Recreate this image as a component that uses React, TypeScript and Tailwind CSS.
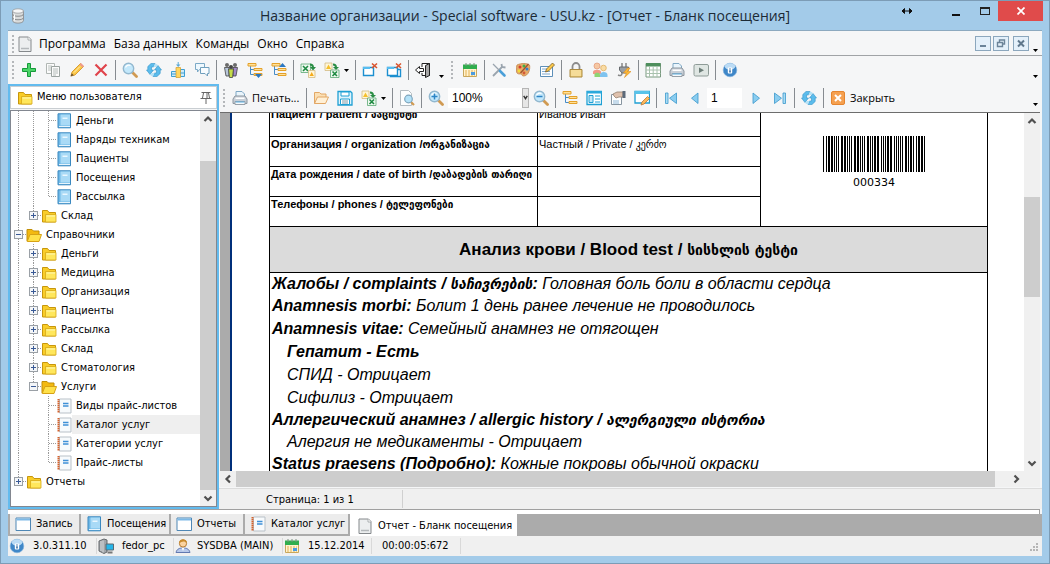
import type { ReactNode } from "react";

type Cell = "line" | "tee" | "corner" | "blank" | "plus" | "minus" | "plusLast" | "minusLast";

type TreeRow = {
  cells: Cell[];
  icon: "book" | "folder" | "open" | "list";
  label: string;
  active?: boolean;
};

const tree: TreeRow[] = [
  { cells: ["line", "line", "tee"], icon: "book", label: "Деньги" },
  { cells: ["line", "line", "tee"], icon: "book", label: "Наряды техникам" },
  { cells: ["line", "line", "tee"], icon: "book", label: "Пациенты" },
  { cells: ["line", "line", "tee"], icon: "book", label: "Посещения" },
  { cells: ["line", "line", "corner"], icon: "book", label: "Рассылка" },
  { cells: ["line", "plusLast"], icon: "folder", label: "Склад" },
  { cells: ["minus"], icon: "open", label: "Справочники" },
  { cells: ["line", "plus"], icon: "folder", label: "Деньги" },
  { cells: ["line", "plus"], icon: "folder", label: "Медицина" },
  { cells: ["line", "plus"], icon: "folder", label: "Организация" },
  { cells: ["line", "plus"], icon: "folder", label: "Пациенты" },
  { cells: ["line", "plus"], icon: "folder", label: "Рассылка" },
  { cells: ["line", "plus"], icon: "folder", label: "Склад" },
  { cells: ["line", "plus"], icon: "folder", label: "Стоматология" },
  { cells: ["line", "minusLast"], icon: "open", label: "Услуги" },
  { cells: ["line", "blank", "tee"], icon: "list", label: "Виды прайс-листов" },
  { cells: ["line", "blank", "tee"], icon: "list", label: "Каталог услуг", active: true },
  { cells: ["line", "blank", "tee"], icon: "list", label: "Категории услуг" },
  { cells: ["line", "blank", "corner"], icon: "list", label: "Прайс-листы" },
  { cells: ["plusLast"], icon: "folder", label: "Отчеты" },
];

// [x, width] of every bar
const bars = [
  [0, 1], [3, 1], [5, 2], [8, 2], [11, 1], [13, 1], [15, 1], [18, 2], [21, 2], [24, 1], [26, 1], [28, 1],
  [31, 2], [34, 2], [37, 1], [39, 1], [41, 1], [44, 2], [47, 1], [49, 1], [51, 2], [54, 2], [58, 1], [60, 1],
  [62, 1], [64, 2], [67, 2], [71, 1], [73, 1], [75, 1], [77, 1], [79, 1], [82, 2], [85, 1], [87, 2], [90, 1],
  [93, 1], [95, 2], [98, 2], [101, 1],
];

const excel = (
  <>
    <path d="M1 2h9.500v8.500H1z" fill="#eef9f0" stroke="#5aa873" strokeWidth=".8" />
    <path d="M3 4l5 5M8 4L3 9" stroke="#1e8a42" strokeWidth="1.600" />
    <path d="M10 2.500c2 0 3 1 3 3" fill="none" stroke="#2a8d45" strokeWidth="2" />
    <path d="M10 5h6l-3 3.500z" fill="#2a8d45" />
    <path d="M8.500 8.500h6.500v7H8.500z" fill="#fff6d8" stroke="#d3bb83" strokeWidth=".8" />
    <path d="M9.500 14l2.200-4 2.200 4z" fill="#f5ab1c" />
  </>
);

const excelOut = (
  <>
    <path d="M1 1h7v7.500H1z" fill="#fff6d8" stroke="#d3bb83" strokeWidth=".8" />
    <path d="M2 7l2.500-4.500L7 7z" fill="#f5c02c" />
    <path d="M9 2.500c2 0 3 1 3 3" fill="none" stroke="#2a8d45" strokeWidth="2" />
    <path d="M9 5h6l-3 3z" fill="#2a8d45" />
    <path d="M6.500 8h8.500v7.500H6.500z" fill="#eef9f0" stroke="#5aa873" strokeWidth=".8" />
    <path d="M8.500 9.500l4.500 4.500M13 9.500L8.500 14" stroke="#1e8a42" strokeWidth="1.600" />
  </>
);

const refreshHalf = (
  <>
    <path d="M1.800 8V4.500L5 1.500h4L7.500 5H5.500v3h2L4 12.500.500 8z" fill="#5bbcec" stroke="#3493c9" strokeWidth=".6" />
    <path d="M9 1.500L7.500 5h3l1-2.500z" fill="#b5e2f7" />
  </>
);

const refresh = (
  <>
    {refreshHalf}
    <g transform="rotate(180 8 8)">{refreshHalf}</g>
  </>
);

const lens = (
  <>
    <path d="M10.500 10.500l4 4" stroke="#d09a52" strokeWidth="2.800" strokeLinecap="round" />
    <circle cx="6.500" cy="6.500" r="5.200" fill="#c3e8fb" stroke="#93b8cf" strokeWidth="1.400" />
    <path d="M3.500 5.500a3.500 3.500 0 0 1 5-2" stroke="#fff" fill="none" strokeWidth="1.200" />
  </>
);

const printer = (
  <>
    <path d="M4 8V1.500h6L12.500 4v4z" fill="#eaf5fc" stroke="#7fa8c4" />
    <path d="M1 9l2-3h10l2 3v4.500H1z" fill="#c9d0d8" stroke="#8d969f" />
    <path d="M3.500 7.500h9V9h-9z" fill="#fff" />
    <path d="M3 11.500h10v3H3z" fill="#f7f8fa" stroke="#98a0a8" />
    <path d="M3.500 12h9" stroke="#5db3e6" />
  </>
);

const calendar = (
  <>
    <path d="M1.500 3.500h13v11h-13z" fill="#fff3cf" stroke="#c8a75c" />
    <path d="M1 2.500h14V7H1z" fill="#2fae4d" />
    <path d="M4 1v3M8 1v3M12 1v3" stroke="#7b8f7e" />
    <path d="M3 9h10M3 11h10M3 13h10" stroke="#e4b052" strokeDasharray="2 1" />
    <path d="M9 10h4v3H9z" fill="#4a9be0" />
  </>
);

const info = (
  <>
    <circle cx="8" cy="8" r="6.800" fill="#3f87c8" stroke="#7fb0dc" strokeWidth=".6" />
    <ellipse cx="8" cy="4.500" rx="5.200" ry="3.200" fill="#bcdcf5" />
    <rect x="5.800" y="5.500" width="4.400" height="6" rx="1" fill="#fff" />
    <path d="M8 6.500v1M8 8.200v2.300" stroke="#1d5c9a" strokeWidth="1.400" />
  </>
);

const folder = (
  <>
    <path d="M1.500 2.500h5L8 4.500h6.500V14h-13z" fill="#f9cd28" stroke="#c7960c" />
    <path d="M4.500 6.500h10.500V14H4.500z" fill="#ffe75c" stroke="#d7a818" strokeWidth=".8" />
    <path d="M5.500 8h8.500" stroke="#fff8b4" />
  </>
);

const windowX = (
  <>
    <path d="M1.500 5.500h10v8h-10z" fill="#fff" stroke="#1b8fd0" strokeWidth="1.400" />
    <path d="M1 5h7v2H1z" fill="#57bdf0" />
    <path d="M10 1.500l5 4.500M15 1.500L10 6" stroke="#d9532c" strokeWidth="1.600" />
  </>
);

const treeLines = (
  <>
    <path d="M3.500 4v8.500H7M3.500 7.500H7" fill="none" stroke="#468cc8" />
    <path d="M1 1.500h8v2.500H1z" fill="#ffe19a" stroke="#e4a12a" />
    <path d="M7 6.500h8v2H7z" fill="#ffe19a" stroke="#e4a12a" />
    <path d="M7 11.500h8v2H7z" fill="#ffe19a" stroke="#e4a12a" />
  </>
);

const icons: Record<string, ReactNode> = {
  add: <path d="M6.500 1.500h3v5h5v3h-5v5h-3v-5h-5v-3h5z" fill="#4bd468" stroke="#159a3a" />,
  copy: (
    <>
      <path d="M1.500 1.500h8v10h-8z" fill="#fbfbfb" stroke="#b0b6b3" />
      <path d="M3 4h4M3 6h3M3 8h3" stroke="#b9c0bd" />
      <path d="M6.500 4.500h8v10h-8z" fill="#fbfbfb" stroke="#9ba3a0" />
      <path d="M8 7h5M8 9h5M8 11h5M8 13h3" stroke="#b4bcb9" />
    </>
  ),
  pencil: (
    <>
      <path d="M2 14l1-4 8.500-8.500 3 3L6 13z" fill="#fbc84a" stroke="#d18d1a" strokeWidth=".8" />
      <path d="M10.500 2.500l1.500-1.500 3 3L13.500 5.500z" fill="#ef9a8c" />
      <path d="M1.500 14.500l1.300-3.300 2 2z" fill="#6b5330" />
      <path d="M5 10.500l6-6" stroke="#fff0b5" />
    </>
  ),
  del: <path d="M2.500 2.500l11 11M13.500 2.500l-11 11" stroke="#e0444b" strokeWidth="2.200" />,
  lens,
  refresh,
  import: (
    <>
      <path d="M1.500 9.500h5v5h-5zM10.500 7.500h4v7h-4z" fill="#cdebf9" stroke="#3d9fd4" />
      <path d="M6 5.500h4.500v10H6z" fill="#ffd65e" stroke="#d6a43a" strokeWidth=".8" />
      <path d="M1 12h5M10.500 11h4" stroke="#3d9fd4" />
      <path d="M8.200 0v3" stroke="#5ba8d6" />
      <path d="M6 2.500h4.500L8.200 5z" fill="#5ba8d6" />
    </>
  ),
  chat: (
    <>
      <path d="M1.500 1.500h9v6h-5L3.500 10V7.500h-2z" fill="#eef8fe" stroke="#7ba9c6" />
      <path d="M6.500 5.500h8.500v6h-1.500V14L11 11.500H6.500z" fill="#f8fcff" stroke="#6f9fbd" />
    </>
  ),
  people: (
    <>
      <circle cx="4" cy="3" r="2" fill="#6a6a6a" />
      <circle cx="12" cy="3" r="2" fill="#6a6a6a" />
      <path d="M1.500 5.500H6V14H3z" fill="#b7c6da" stroke="#444" strokeWidth=".8" />
      <path d="M10 5.500h4.500L13 14h-3z" fill="#a18ac8" stroke="#444" strokeWidth=".8" />
      <path d="M5.500 7h5l-1 8.500h-3z" fill="#c5dc4a" stroke="#444" strokeWidth=".8" />
      <circle cx="8" cy="5" r="2" fill="#444" />
    </>
  ),
  treeDown: (
    <>
      {treeLines}
      <path d="M8 12h7l-3.500 4z" fill="#2b78c2" />
    </>
  ),
  treeUp: (
    <>
      {treeLines}
      <path d="M8 5h7l-3.500-4z" fill="#2b78c2" />
    </>
  ),
  tree: treeLines,
  excel,
  excelOut,
  windowX,
  windowsX: (
    <>
      <path d="M4.500 7.500h10v7h-10z" fill="#fff" stroke="#1b8fd0" strokeWidth="1.400" />
      {windowX}
    </>
  ),
  door: (
    <>
      <path d="M7 5V1.500h7.500v12H7V11" fill="#fff" stroke="#222" />
      <path d="M10.500 3.500l4-2v12l-4 2z" fill="#a5a5a5" stroke="#222" />
      <path d="M.5 8l4-3.500v2H8.500v3h-4v2z" fill="#fff" stroke="#222" />
    </>
  ),
  calendar,
  tools: (
    <>
      <path d="M2 14l9-9" stroke="#9aa4ae" strokeWidth="1.800" />
      <path d="M10.500 2l.5 3 3.500.5" stroke="#9aa4ae" strokeWidth="1.800" fill="none" />
      <path d="M2 2l6 6" stroke="#9aa4ae" strokeWidth="1.200" />
      <path d="M9 9l4.500 4.500" stroke="#4a9fd8" strokeWidth="2.600" strokeLinecap="round" />
    </>
  ),
  palette: (
    <>
      <path d="M2 3c4-2 10-2 12.500 0 1 4-1 11-6 11-2 0-1-2-3-2s-4 0-4-3 0-5 .5-6z" fill="#e6ab68" stroke="#c4854c" strokeWidth=".8" />
      <circle cx="5" cy="5" r="1.500" fill="#d43e2c" />
      <circle cx="9" cy="4" r="1.500" fill="#3fae49" />
      <circle cx="12" cy="7" r="1.500" fill="#2e7fd0" />
      <circle cx="4" cy="9" r="1.400" fill="#f2dc35" />
      <circle cx="9" cy="11" r="1.400" fill="#d45a3a" />
      <path d="M5.500 11l8-9" stroke="#a0522d" strokeWidth="1.300" />
    </>
  ),
  formEdit: (
    <>
      <path d="M1.500 4.500h12v10h-12z" fill="#fff" stroke="#5d8fb8" />
      <path d="M3 7h5M3 9.500h8M3 12h8" stroke="#7fa9d0" />
      <path d="M6.500 10l1-3 6-6 2 2-6 6z" fill="#fbc84a" stroke="#7a5d25" strokeWidth=".8" />
    </>
  ),
  lock: (
    <>
      <path d="M4.500 8V4.500a3.500 3.500 0 0 1 7 0V8" fill="none" stroke="#8c8c8c" strokeWidth="1.800" />
      <path d="M2 7.500h12v7.500H2z" fill="#efcf7c" stroke="#ab8a40" />
      <path d="M3 9h10M3 11h10M3 13h10" stroke="#fbe9b4" />
    </>
  ),
  users: (
    <>
      <circle cx="5" cy="4" r="3" fill="#f6c7a2" stroke="#e39d7d" strokeWidth=".8" />
      <path d="M1 10c0-3 8-3 8 0v2H1z" fill="#f29a86" />
      <circle cx="11.500" cy="6" r="2.800" fill="#f9dca6" stroke="#dfb060" strokeWidth=".8" />
      <path d="M8 13c0-4 7.500-4 7.500 0v2H8z" fill="#7fc3ef" />
      <path d="M2.500 12.500c0-2.500 5.500-2.500 5.500 0V15H2.500z" fill="#8ed573" />
    </>
  ),
  plug: (
    <>
      <path d="M6 1v4M10 1v4" stroke="#888" strokeWidth="1.500" />
      <path d="M3.500 5h9v3L10 11H6L3.500 8z" fill="#9a9ea3" stroke="#666a6e" />
      <path d="M6 11c0 3-2 3-4 2" fill="none" stroke="#888" strokeWidth="1.500" />
      <path d="M11.500 6L7.500 11h3l-2 4.500 6.500-6h-3.500L14 6z" fill="#fcb836" stroke="#dd8f22" strokeWidth=".6" />
    </>
  ),
  grid: (
    <>
      <path d="M1 1.500h14.500v13.500H1z" fill="#fff" stroke="#7a9a80" />
      <path d="M1 1h14.500v3.500H1z" fill="#4f8f5d" />
      <path d="M1 8h14.500M1 11.500h14.500M4.500 4.500V15M8.200 4.500V15M12 4.500V15" stroke="#a9c2ae" />
    </>
  ),
  printer,
  play: (
    <>
      <rect x="1" y="2.500" width="14.500" height="11.500" rx="1.500" fill="#dfe6e3" stroke="#8e9b97" />
      <path d="M6 5.500v5.500L11 8.200z" fill="#6c7d78" />
    </>
  ),
  info,
  folderOpenPale: (
    <>
      <path d="M1.500 13.500v-11h5L8 4h5v3" fill="#fbe0b5" stroke="#e2a765" />
      <path d="M1.500 13.500L4.500 7h11l-3 6.500z" fill="#fff0d6" stroke="#e2a765" />
    </>
  ),
  save: (
    <>
      <path d="M1 1.500h12.500l1.500 1.500v12H1z" fill="#dff3fc" stroke="#1fa0d4" strokeWidth="1.300" />
      <path d="M4 2h8v4H4zM3.500 9h9v5.500h-9z" fill="#fff" stroke="#1fa0d4" />
      <path d="M5 11h6M5 13h6" stroke="#7a9aa8" />
    </>
  ),
  preview: (
    <>
      <path d="M1.500.500h8l3 3v12h-11z" fill="#fdfefe" stroke="#b4bcc1" />
      <path d="M12 12l3 3" stroke="#d09a52" strokeWidth="2.200" />
      <circle cx="9.500" cy="9" r="3.800" fill="#b4e2f8" stroke="#7da5bd" strokeWidth="1.200" />
    </>
  ),
  zoomIn: (
    <>
      {lens}
      <path d="M3.500 6.500h6M6.500 3.500v6" stroke="#2d85c6" strokeWidth="1.500" />
    </>
  ),
  zoomOut: (
    <>
      {lens}
      <path d="M3.500 6.500h6" stroke="#2d85c6" strokeWidth="1.500" />
    </>
  ),
  layout: (
    <>
      <path d="M1 1.500h14.500v13H1z" fill="#fff" stroke="#1fa0d4" strokeWidth="1.300" />
      <path d="M1 1h14.500v2.500H1z" fill="#2aa9dc" />
      <path d="M3 5.500h4v7H3z" fill="#bfe7f8" stroke="#1fa0d4" />
      <path d="M9 6h5M9 9h5M9 12h5" stroke="#1fa0d4" />
    </>
  ),
  handPage: (
    <>
      <path d="M1.500 4.500h10v10h-10z" fill="#fff" stroke="#8795a0" />
      <path d="M3 11h6M3 13h6" stroke="#8fb8d8" />
      <path d="M3 4l4-2h6v5H9L6 8 4 6z" fill="#e0c2ae" stroke="#94806f" strokeWidth=".8" />
      <path d="M12.500 1h3v7h-3z" fill="#5c6a7a" />
    </>
  ),
  pageEdit: (
    <>
      <path d="M1 1.500h14.500v11.500H1z" fill="#fff" stroke="#1fa0d4" strokeWidth="1.300" />
      <path d="M1 1h14.500v3H1z" fill="#57c3ea" />
      <path d="M7 15l1-3 5.500-5.500 2 2-5.500 5.500z" fill="#fbb95a" stroke="#b9793a" strokeWidth=".8" />
    </>
  ),
  first: (
    <>
      <path d="M2.500 3h2.500v10.500H2.500z" fill="#a8dcf5" stroke="#3b98cc" strokeWidth=".8" />
      <path d="M13.500 3v10.500L6.500 8.200z" fill="#8acdf0" stroke="#3b98cc" strokeWidth=".8" />
    </>
  ),
  prev: <path d="M11 3v10.500L4.500 8.200z" fill="#8acdf0" stroke="#3b98cc" strokeWidth=".8" />,
  next: <path d="M5 3v10.500l6.500-5.300z" fill="#8acdf0" stroke="#3b98cc" strokeWidth=".8" />,
  last: (
    <>
      <path d="M11 3h2.500v10.500H11z" fill="#a8dcf5" stroke="#3b98cc" strokeWidth=".8" />
      <path d="M2.500 3v10.500l7-5.300z" fill="#8acdf0" stroke="#3b98cc" strokeWidth=".8" />
    </>
  ),
  closeOrange: (
    <>
      <rect x="1.500" y="1.500" width="13" height="13" rx="1.500" fill="#f5a050" stroke="#e5852f" />
      <path d="M5 5l6 6M11 5l-6 6" stroke="#fff" strokeWidth="2" />
    </>
  ),
  page: (
    <>
      <path d="M2 1h9.500l2.500 2.500v12H2z" fill="#eceeef" stroke="#85898c" />
      <path d="M11 1v3h3" fill="#fff" stroke="#9a9ea1" strokeWidth=".8" />
      <path d="M4 12.500h8" stroke="#b4b8bb" strokeWidth="1.500" />
    </>
  ),
  folder,
  open: (
    <>
      <path d="M1 14V2.500h5L7.500 4H13v4" fill="#f3b911" stroke="#c18f08" />
      <path d="M1.200 14.500L4 7.500h11.500l-2.500 7z" fill="#ffe14a" stroke="#d7a215" />
    </>
  ),
  book: (
    <>
      <path d="M2 .8h12.500v14H2z" fill="#6fb8e6" stroke="#3a88bf" />
      <path d="M4.500 1.500h9.500v11H4.500z" fill="#a9daf6" />
      <path d="M6.500 4.500h5v1.500h-5z" fill="#e9f7ff" />
      <path d="M3 13.500h11" stroke="#e6f4fc" />
    </>
  ),
  list: (
    <>
      <path d="M3.500 1h11.500v14H3.500z" fill="#f7fafc" stroke="#b9c1c8" />
      <path d="M2.500 1v14" stroke="#d4622c" strokeWidth="2" strokeDasharray="1.500 .5" />
      <path d="M7 5.500h5.500M7 8h5.500" stroke="#3f90d6" strokeWidth="1.400" />
    </>
  ),
  window: (
    <>
      <path d="M1 2h14.500v12.500H1z" fill="#fff" stroke="#4f87b5" />
      <path d="M1.500 2.500h13.500v2H1.500z" fill="#7db9e6" />
    </>
  ),
  server: (
    <>
      <path d="M1 3l5-2 3 1v12l-3 1.500L1 13z" fill="#a0a4a8" stroke="#65696c" />
      <path d="M3 3v10M5 2.500v12" stroke="#d7dadc" />
      <path d="M8 6h7.500v6H8z" fill="#27b5e8" stroke="#5a6a73" />
      <path d="M9.500 14.500h5" stroke="#777" strokeWidth="2" />
    </>
  ),
  user: (
    <>
      <path d="M1 14.500c1-4 4-4.500 7-4.500s6 .5 7 4.500z" fill="#b8c9ea" stroke="#6178b0" />
      <path d="M6.500 9.500h3L8 13z" fill="#fff" />
      <circle cx="8" cy="5.500" r="3.600" fill="#fbd3a0" stroke="#b5792e" />
      <path d="M4 5c0-5 8-5 8 0-2-2-5-2-8 0z" fill="#c98a2b" />
    </>
  ),
  pin: <path d="M3.500 2.500h9M5.500 3l-1 5M10.500 3l1 5M9 3v5M2.500 8.500h11M8 9v5" fill="none" stroke="#666" />,
  database: (
    <>
      <path d="M2.500 3v9.500c0 3.500 11 3.500 11 0V3z" fill="#d9dbdb" stroke="#85888a" strokeWidth=".8" />
      <path d="M2.500 6c0 3 11 3 11 0M2.500 9.500c0 3 11 3 11 0" fill="none" stroke="#8c8f91" />
      <ellipse cx="8" cy="3" rx="5.500" ry="2.200" fill="#f7f7f7" stroke="#9a9d9f" strokeWidth=".8" />
      <path d="M4.500 6.500v6" stroke="#fff" />
    </>
  ),
};

function Icon({ name }: { name: string }) {
  return (
    <svg viewBox="0 0 16 16" className="h-4 w-4 shrink-0" aria-hidden="true">
      {icons[name]}
    </svg>
  );
}

function ToolButton({ name, label }: { name: string; label: string }) {
  return (
    <button aria-label={label} className="flex h-6 w-6 shrink-0 items-center justify-center">
      <Icon name={name} />
    </button>
  );
}

function Sep() {
  return (
    <div className="flex w-[5px] shrink-0 justify-center">
      <div className="h-5 w-px bg-[#868b90]" />
    </div>
  );
}

function Grip() {
  return (
    <svg className="h-5 w-[9px] shrink-0" viewBox="0 0 9 20" aria-hidden="true">
      <path d="M5 1v19" stroke="#b4b7ba" strokeWidth="2" strokeDasharray="2 2" />
    </svg>
  );
}

function DropArrow({ label }: { label: string }) {
  return (
    <button aria-label={label} className="flex h-6 w-[9px] shrink-0 items-center">
      <svg viewBox="0 0 5 3" className="h-[3px] w-[5px]">
        <path d="M0 0h5L2.500 3z" fill="#000" />
      </svg>
    </button>
  );
}

function Overflow() {
  return (
    <button aria-label="Еще" className="flex h-6 w-3 shrink-0 items-end justify-center pb-1">
      <svg viewBox="0 0 5 3" className="h-[3px] w-[5px]">
        <path d="M0 0h5L2.500 3z" fill="#000" />
      </svg>
    </button>
  );
}

function Chevron({ dir }: { dir: "up" | "down" | "left" | "right" }) {
  const d = {
    up: "M4.500 10L8 6.500l3.500 3.500",
    down: "M4.500 6.500L8 10l3.500-3.500",
    left: "M10 4.500L6.500 8l3.500 3.500",
    right: "M6.500 4.500L10 8l-3.500 3.500",
  }[dir];
  return (
    <button aria-label={dir} className="h-4 w-4 shrink-0">
      <svg viewBox="0 0 16 16" className="h-4 w-4">
        <path d={d} fill="none" stroke="#505050" strokeWidth="2.200" />
      </svg>
    </button>
  );
}

function TreeCell({ kind }: { kind: Cell }) {
  const dots = { stroke: "#9a9a9a", strokeDasharray: "1 1", fill: "none" };
  const box = kind.startsWith("plus") || kind.startsWith("minus");
  const toBottom = kind === "line" || kind === "tee" || kind === "plus" || kind === "minus";
  return (
    <svg viewBox="0 0 15 19" className="h-[19px] w-[15px] shrink-0" aria-hidden="true">
      {kind !== "blank" && <path d={toBottom ? "M7.500 0v19" : "M7.500 0v10"} {...dots} />}
      {kind !== "blank" && kind !== "line" && <path d="M8 9.500h7" {...dots} />}
      {box && (
        <>
          <rect x="3.500" y="5.500" width="8" height="8" fill="#f4f6f8" stroke="#9aa0a6" />
          <path d={kind.startsWith("plus") ? "M5 9.500h5M7.500 7v5" : "M5 9.500h5"} stroke="#3a5a96" />
        </>
      )}
    </svg>
  );
}

function Ka({ children }: { children: ReactNode }) {
  return <span className="font-['DejaVu_Sans',sans-serif] text-sm leading-none">{children}</span>;
}

const fields = [
  { label: "Пациент / patient / ", ka: "პაციენტი", value: "Иванов Иван" },
  { label: "Организация / organization /", ka: "ორგანიზაცია", value: "Частный / Private / ", valueKa: "კერძო" },
  { label: "Дата рождения / date of birth /", ka: "დაბადების თარიღი", value: "" },
  { label: "Телефоны / phones / ", ka: "ტელეფონები", value: "" },
];

function Report() {
  return (
    <table className="-mt-[7px] w-full table-fixed border-collapse bg-white font-['Liberation_Sans',Arial,sans-serif] text-[11px] text-black">
      <colgroup>
        <col className="w-[268px]" />
        <col />
        <col className="w-[227px]" />
      </colgroup>
      <tbody>
        {fields.map((f, i) => (
          <tr key={f.label} className="h-[30px]">
            <th className="overflow-hidden border border-black px-px text-left align-top leading-[14px] font-bold whitespace-nowrap">
              {f.label}
              <span className="font-['DejaVu_Sans_Condensed','DejaVu_Sans',sans-serif]">{f.ka}</span>
            </th>
            <td className="border border-black px-px align-top leading-[14px] whitespace-nowrap">
              {f.value}
              <span className="font-['DejaVu_Sans_Condensed','DejaVu_Sans',sans-serif]">{f.valueKa}</span>
            </td>
            {i === 0 && (
              <td rowSpan={4} className="border border-black pt-[29px] align-top">
                <svg viewBox="0 0 102 36" className="mx-auto h-9 w-[102px]" role="img" aria-label="000334">
                  {bars.map(([x, w]) => (
                    <rect key={x} x={x} width={w} height="36" fill="#000" shapeRendering="crispEdges" />
                  ))}
                </svg>
                <div className="mt-1 text-center font-['DejaVu_Sans',sans-serif] leading-[14px]">000334</div>
              </td>
            )}
          </tr>
        ))}
        <tr className="h-[46px]">
          <th colSpan={3} className="border border-black bg-[#dbdbdb] text-center text-[17px] font-bold">
            Анализ крови / Blood test / <Ka>სისხლის ტესტი</Ka>
          </th>
        </tr>
        <tr>
          <td colSpan={3} className="h-[240px] border border-black px-[2px] align-top text-base italic">
            <p className="h-[22px] leading-[22px]">
              <b>Жалобы / complaints / <Ka>საჩივრების</Ka>:</b> Головная боль боли в области сердца
            </p>
            <p className="h-[22px] leading-[22px]">
              <b>Anamnesis morbi:</b> Болит 1 день ранее лечение не проводилось
            </p>
            <p className="h-[23px] leading-[23px]">
              <b>Anamnesis vitae:</b> Семейный анамнез не отягощен
            </p>
            <p className="h-[23px] pl-[15px] leading-[23px] font-bold">Гепатит - Есть</p>
            <p className="h-[23px] pl-[15px] leading-[23px]">СПИД - Отрицает</p>
            <p className="h-[23px] pl-[15px] leading-[23px]">Сифилиз - Отрицает</p>
            <p className="h-[22px] leading-[22px] font-bold">
              Аллергический анамнез / allergic history / <Ka>ალერგიული ისტორია</Ka>
            </p>
            <p className="h-[22px] pl-[15px] leading-[22px]">Алергия не медикаменты - Отрицает</p>
            <p className="h-[22px] leading-[22px]">
              <b>Status praesens (Подробно):</b> Кожные покровы обычной окраски
            </p>
          </td>
        </tr>
      </tbody>
    </table>
  );
}

const tabs = [
  { icon: "window", label: "Запись", width: "w-[71px]" },
  { icon: "book", label: "Посещения", width: "w-[90px]" },
  { icon: "window", label: "Отчеты", width: "w-[74px]" },
  { icon: "list", label: "Каталог услуг", width: "w-[105px]" },
];

export default function App() {
  return (
    <div className="flex h-screen w-full flex-col overflow-hidden border border-[#7c9cb6] bg-[#a3cbe9] px-[7px] pb-[7px] font-['DejaVu_Sans_Condensed','DejaVu_Sans',sans-serif] text-[11px] text-black">
      <header className="flex h-[29px] shrink-0 items-center">
        <div className="w-[143px] pl-[2px]">
          <Icon name="database" />
        </div>
        <h1 className="flex-1 text-center font-['Open_Sans','Noto_Sans',sans-serif] text-sm whitespace-nowrap text-[#1c2a36]">
          Название организации - Special software - USU.kz - [Отчет - Бланк посещения]
        </h1>
        <div className="-mr-[7px] flex h-5 w-[150px] items-center self-start">
          <button aria-label="Переместить" className="w-[30px] pl-[2px]">
            <svg viewBox="0 0 12 8" className="h-2 w-3">
              <path d="M1 4l2.500-2.500v5zM11 4L8.500 1.500v5zM3 4h6" fill="#111" stroke="#111" />
            </svg>
          </button>
          <div className="flex-1" />
          <button aria-label="Свернуть" className="mt-2 mr-5 h-[2px] w-2 bg-[#111]" />
          <button aria-label="Развернуть" className="mr-2 h-2 w-[10px] border border-t-2 border-[#222]" />
          <button aria-label="Закрыть окно" className="mr-[6px] flex h-5 w-[45px] items-center justify-center bg-[#e04b4b]">
            <svg viewBox="0 0 8 8" className="h-2 w-2">
              <path d="M.5.500l7 7M7.500.500l-7 7" stroke="#fff" strokeWidth="1.700" />
            </svg>
          </button>
        </div>
      </header>

      <div className="flex min-h-0 flex-1 flex-col border-t border-[#8ca9bf] bg-[#f5f6f7]">
        <nav className="flex h-[25px] shrink-0 items-center border-b border-[#a0a3a6] pt-px font-['Open_Sans','Noto_Sans',sans-serif] text-xs">
          <Grip />
          <div className="mr-[6px]">
            <Icon name="page" />
          </div>
          <div className="flex gap-2">
            <button>Программа</button>
            <button>База данных</button>
            <button>Команды</button>
            <button>Окно</button>
            <button>Справка</button>
          </div>
          <div className="flex-1" />
          <div className="flex gap-[2px]">
            <button aria-label="Свернуть отчет" className="h-[15px] w-4 border border-[#8ca7bd] bg-[#e4f0fa]">
              <svg viewBox="0 0 14 13">
                <path d="M4 9h6" stroke="#6c8499" strokeWidth="2" />
              </svg>
            </button>
            <button aria-label="Восстановить отчет" className="h-[15px] w-4 border border-[#8ca7bd] bg-[#e4f0fa]">
              <svg viewBox="0 0 14 13">
                <path d="M5.500 5V3h5v4H9M3.500 5.500h5v4h-5z" fill="none" stroke="#6c8499" strokeWidth="1.400" />
              </svg>
            </button>
            <button aria-label="Закрыть отчет" className="ml-[2px] h-[15px] w-4 border border-[#8ca7bd] bg-[#e4f0fa]">
              <svg viewBox="0 0 14 13">
                <path d="M4 3.500l6 6M10 3.500l-6 6" stroke="#5f778c" strokeWidth="2" />
              </svg>
            </button>
          </div>
          <div className="mr-[1px]">
            <Overflow />
          </div>
        </nav>

        <div className="flex h-7 shrink-0 items-center">
          <Grip />
          <ToolButton name="add" label="Добавить" />
          <ToolButton name="copy" label="Копировать" />
          <ToolButton name="pencil" label="Изменить" />
          <ToolButton name="del" label="Удалить" />
          <Sep />
          <ToolButton name="lens" label="Поиск" />
          <ToolButton name="refresh" label="Обновить" />
          <ToolButton name="import" label="Импорт" />
          <ToolButton name="chat" label="Сообщения" />
          <Sep />
          <ToolButton name="people" label="Клиенты" />
          <ToolButton name="treeDown" label="Развернуть все" />
          <ToolButton name="treeUp" label="Свернуть все" />
          <Sep />
          <ToolButton name="excel" label="Из Excel" />
          <ToolButton name="excelOut" label="В Excel" />
          <DropArrow label="Форматы" />
          <Sep />
          <ToolButton name="windowX" label="Закрыть вкладку" />
          <ToolButton name="windowsX" label="Закрыть вкладки" />
          <Sep />
          <ToolButton name="door" label="Выход" />
          <Overflow />
          <Grip />
          <div className="w-[2px]" />
          <ToolButton name="calendar" label="Календарь" />
          <Sep />
          <ToolButton name="tools" label="Настройки" />
          <ToolButton name="palette" label="Оформление" />
          <ToolButton name="formEdit" label="Форма" />
          <Sep />
          <ToolButton name="lock" label="Блокировка" />
          <ToolButton name="users" label="Пользователи" />
          <ToolButton name="plug" label="Подключение" />
          <Sep />
          <ToolButton name="grid" label="Таблица" />
          <ToolButton name="printer" label="Принтер" />
          <ToolButton name="play" label="Видео" />
          <Sep />
          <ToolButton name="info" label="О программе" />
          <div className="flex-1" />
          <div className="mr-[1px]">
            <Overflow />
          </div>
        </div>

        <main className="flex min-h-0 flex-1">
          <aside className="flex w-[211px] shrink-0 flex-col border-2 border-[#63bbee] bg-[#f5f6f7]">
            <div className="flex h-[23px] shrink-0 items-center border border-[#c9ced2] bg-white pr-[2px] pl-[6px]">
              <Icon name="folder" />
              <h2 className="ml-1 flex-1">Меню пользователя</h2>
              <button aria-label="Закрепить">
                <Icon name="pin" />
              </button>
            </div>
            <div className="mt-[1px] flex min-h-0 flex-1 border border-[#828790] bg-white">
              <ul className="min-w-0 flex-1 overflow-hidden">
                {tree.map((row, i) => (
                  <li key={i} className="flex h-[19px] items-center">
                    {row.cells.map((c, j) => (
                      <TreeCell key={j} kind={c} />
                    ))}
                    <Icon name={row.icon} />
                    <button className={`h-[19px] flex-1 pt-px pl-1 text-left whitespace-nowrap ${row.active ? "bg-[#efefef]" : ""}`}>
                      {row.label}
                    </button>
                  </li>
                ))}
              </ul>
              <div className="flex w-4 shrink-0 flex-col bg-[#f0f0f0]">
                <Chevron dir="up" />
                <div className="mt-[34px] flex-1 bg-[#cdcdcd]" />
                <Chevron dir="down" />
              </div>
            </div>
          </aside>

          <section className="flex min-w-0 flex-1 flex-col">
            <div className="flex h-7 shrink-0 items-center">
              <Grip />
              <button className="flex h-6 w-[76px] shrink-0 items-center gap-1 pl-1 font-['Open_Sans','Noto_Sans',sans-serif] text-[11px]">
                <Icon name="printer" />
                Печать...
              </button>
              <Sep />
              <ToolButton name="folderOpenPale" label="Открыть" />
              <ToolButton name="save" label="Сохранить" />
              <ToolButton name="excelOut" label="Экспорт" />
              <DropArrow label="Формат экспорта" />
              <Sep />
              <ToolButton name="preview" label="Просмотр" />
              <Sep />
              <ToolButton name="zoomIn" label="Увеличить" />
              <div className="flex h-5 w-[81px] shrink-0">
                <select aria-label="Масштаб" className="min-w-0 flex-1 appearance-none bg-white px-1 font-['Liberation_Sans',sans-serif] text-xs">
                  <option>100%</option>
                </select>
                <svg viewBox="0 0 7 20" className="h-5 w-[7px] border border-[#b5b5b5] bg-[#e6e6e6]" aria-hidden="true">
                  <path d="M1 7l2.500 4L6 7" fill="none" stroke="#333" strokeWidth="2" />
                </svg>
              </div>
              <ToolButton name="zoomOut" label="Уменьшить" />
              <Sep />
              <ToolButton name="tree" label="Структура" />
              <ToolButton name="layout" label="Миниатюры" />
              <ToolButton name="handPage" label="Параметры страницы" />
              <ToolButton name="pageEdit" label="Правка страницы" />
              <Sep />
              <ToolButton name="first" label="Первая" />
              <ToolButton name="prev" label="Предыдущая" />
              <input aria-label="Номер страницы" defaultValue="1" className="mr-[2px] h-5 w-[35px] shrink-0 bg-white px-1 font-['Liberation_Sans',sans-serif] text-xs" />
              <ToolButton name="next" label="Следующая" />
              <ToolButton name="last" label="Последняя" />
              <Sep />
              <ToolButton name="refresh" label="Обновить отчет" />
              <Sep />
              <button className="flex h-6 shrink-0 items-center gap-1 pl-1 font-['Open_Sans','Noto_Sans',sans-serif] text-[11px]">
                <Icon name="closeOrange" />
                Закрыть
              </button>
              <div className="flex-1" />
              <div className="mr-[1px]">
                <Overflow />
              </div>
            </div>

            <div className="mr-[2px] ml-[1px] flex min-h-0 flex-1 border-t border-[#6d6d6d] bg-white">
              <div className="w-[10px] shrink-0 bg-[#ababab]" />
              <div className="w-[2px] shrink-0 bg-[#002f7a]" />
              <div className="min-w-0 flex-1 overflow-hidden pr-9 pl-[37px]">
                <Report />
              </div>
              <div className="flex w-4 shrink-0 flex-col bg-[#f0f0f0]">
                <Chevron dir="up" />
                <div className="mt-[68px] h-[100px] bg-[#cdcdcd]" />
                <div className="flex-1" />
                <Chevron dir="down" />
              </div>
            </div>
            <div className="mr-[2px] ml-[1px] flex h-4 shrink-0 bg-[#f0f0f0]">
              <Chevron dir="left" />
              <div className="mr-[13px] flex-1 bg-[#cdcdcd]" />
              <Chevron dir="right" />
              <div className="w-4" />
            </div>
            <div className="mt-[1px] flex h-[21px] shrink-0 items-center border-t border-[#dcdcdc] bg-[#f0f0f0]">
              <div className="flex h-[18px] w-[184px] items-center border-r border-[#d0d0d0] pt-[2px] pl-[47px]">Страница: 1 из 1</div>
            </div>
          </section>
        </main>

        <div className="mr-[2px] h-[5px] shrink-0 border-t border-r border-[#a0a0a0] bg-white" />
        <div className="flex h-[22px] shrink-0 bg-[#ababab] pl-[2px]">
          {tabs.map((t) => (
            <div key={t.label} className={`flex h-5 shrink-0 ${t.width}`}>
              <button className="mr-[2px] flex flex-1 items-center gap-[5px] bg-[#ececec] pl-[5px] whitespace-nowrap">
                <Icon name={t.icon} />
                {t.label}
              </button>
            </div>
          ))}
          <button className="flex h-[22px] w-[167px] shrink-0 items-center gap-[5px] bg-white pt-[2px] pl-[7px] whitespace-nowrap">
            <Icon name="page" />
            Отчет - Бланк посещения
          </button>
        </div>
        <footer className="flex h-5 shrink-0 items-center bg-[#f0f0f0] whitespace-nowrap">
          <div className="flex w-[88px] items-center gap-2 pl-[1px]">
            <Icon name="info" />
            3.0.311.10
          </div>
          <div className="flex w-[77px] items-center gap-2 border-l border-[#d9d9d9] pl-[1px]">
            <Icon name="server" />
            fedor_pc
          </div>
          <div className="flex w-[109px] items-center gap-[6px] border-l border-[#d9d9d9] pl-[1px]">
            <Icon name="user" />
            SYSDBA (MAIN)
          </div>
          <div className="flex w-[89px] items-center gap-2 border-l border-[#d9d9d9] pl-[1px]">
            <Icon name="calendar" />
            15.12.2014
          </div>
          <div className="w-[90px] border-r border-l border-[#d9d9d9] pl-[10px]">00:00:05:672</div>
          <div className="flex-1" />
          <svg viewBox="0 0 10 10" className="mt-1 mr-[3px] h-[10px] w-[10px]" aria-hidden="true">
            <path d="M7 1h2M4 4h2M7 4h2M1 7h2M4 7h2M7 7h2" stroke="#b5b5b5" strokeWidth="2" />
          </svg>
        </footer>
      </div>
    </div>
  );
}
